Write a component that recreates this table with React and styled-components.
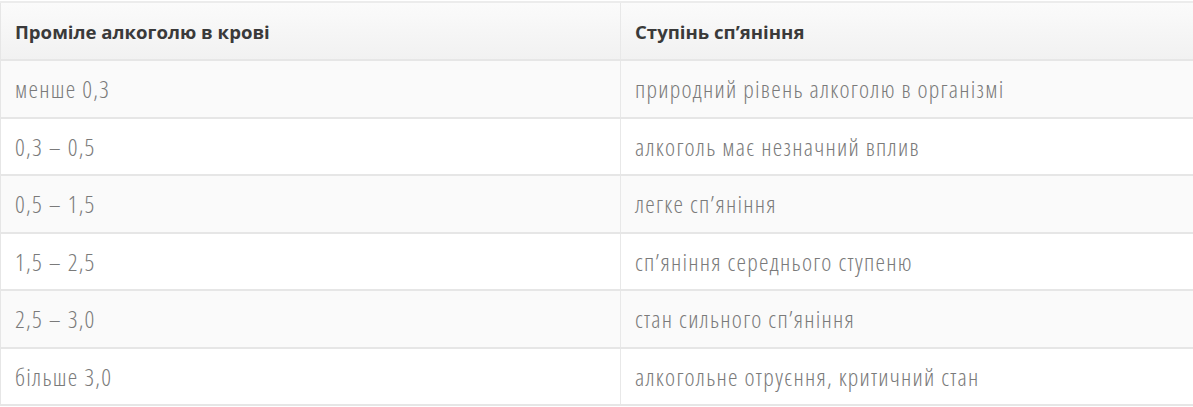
import styled, { createGlobalStyle } from 'styled-components';

const Global = createGlobalStyle`
  body {
    margin: 0;
    background: #fff;
  }
`;

const rows = [
  ['менше 0,3', 'природний рівень алкоголю в організмі'],
  ['0,3 – 0,5', 'алкоголь має незначний вплив'],
  ['0,5 – 1,5', 'легке сп’яніння'],
  ['1,5 – 2,5', 'сп’яніння середнього ступеню'],
  ['2,5 – 3,0', 'стан сильного сп’яніння'],
  ['більше 3,0', 'алкогольне отруєння, критичний стан'],
];

const Table = styled.table`
  width: 1200px;
  margin-top: 1px;
  border-collapse: collapse;
  table-layout: fixed;
  border-top: 2px solid #ececec;
  border-left: 1px solid #e6e6e6;
  font-family: 'Open Sans', sans-serif;
`;

const HeadRow = styled.tr`
  background: linear-gradient(to bottom, #fbfbfb, #f1f1f1);
`;

const Row = styled.tr`
  background: ${(p) => (p.$odd ? '#fafafa' : '#fff')};
`;

const Th = styled.th`
  height: 56px;
  padding: 0 14px;
  text-align: left;
  font-size: 18.6px;
  font-weight: 700;
  font-stretch: 90%;
  color: #3a3a3a;
  border-bottom: 2px solid #e6e6e6;
  border-right: 1px solid #e8e8e8;
  width: ${(p) => p.$w || 'auto'};
`;

const Td = styled.td`
  height: 55.5px;
  padding: 0 14px;
  font-size: 24px;
  font-weight: 300;
  font-stretch: condensed;
  letter-spacing: 1.25px;
  color: #7a7a7a;
  border-bottom: 2px solid #e6e6e6;
  border-right: 1px solid #e8e8e8;
`;

export default function App() {
  return (
    <>
      <Global />
      <Table>
        <thead>
          <HeadRow>
            <Th $w="591px">Проміле алкоголю в крові</Th>
            <Th>Ступінь сп’яніння</Th>
          </HeadRow>
        </thead>
        <tbody>
          {rows.map(([a, b], i) => (
            <Row key={a} $odd={i % 2 === 0}>
              <Td>{a}</Td>
              <Td>{b}</Td>
            </Row>
          ))}
        </tbody>
      </Table>
    </>
  );
}
